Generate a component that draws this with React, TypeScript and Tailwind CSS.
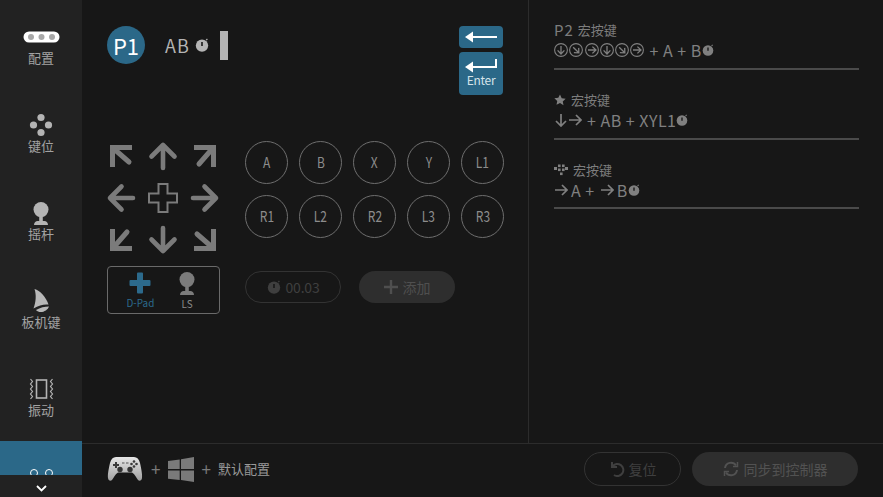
const font = "font-['Noto_Sans_CJK_SC',sans-serif]";

const PadArrow = ({ rot }: { rot: number }) => (
  <svg width="30" height="30" viewBox="0 0 30 30" style={{ transform: `rotate(${rot}deg)` }}>
    <path d="M15 27V4.500M3.500 15.500L15 4l11.500 11.500" fill="none" stroke="#7b7b7b" strokeWidth="4.600" strokeLinecap="round" strokeLinejoin="round" />
  </svg>
);

const DiagArrow = ({ rot }: { rot: number }) => (
  <svg width="30" height="30" viewBox="0 0 30 30" style={{ transform: `rotate(${rot}deg)` }}>
    <path d="M6.500 26V6.500H26" fill="none" stroke="#7b7b7b" strokeWidth="5" strokeLinejoin="miter" />
    <path d="M7.500 7.500L23 21" fill="none" stroke="#7b7b7b" strokeWidth="5" strokeLinecap="round" />
  </svg>
);

const CrossOutline = () => (
  <svg width="30" height="30" viewBox="0 0 30 30">
    <path d="M10.500 1h9v9.500H29v9h-9.500V29h-9v-9.500H1v-9h9.500z" fill="none" stroke="#7b7b7b" strokeWidth="2" />
  </svg>
);

const Timer = ({ size = 14, fill = "#8a8a8a", hand = "#171717" }: { size?: number; fill?: string; hand?: string }) => (
  <svg width={size} height={size} viewBox="0 0 14 14" className="shrink-0">
    <circle cx="7" cy="7.600" r="6.200" fill={fill} />
    <path d="M11.200 2.200l1.200-1.200" stroke={fill} strokeWidth="1.200" />
    <path d="M7 4v4" stroke={hand} strokeWidth="1.600" />
  </svg>
);

const CircleArrow = ({ rot }: { rot: number }) => (
  <svg width="14" height="14" viewBox="0 0 14 14" className="shrink-0">
    <circle cx="7" cy="7" r="6.400" fill="none" stroke="#808080" strokeWidth="1.100" />
    <g transform={`rotate(${rot} 7 7)`}>
      <path d="M7 11V3M3.600 7.400L7 11l3.400-3.600" fill="none" stroke="#808080" strokeWidth="1.300" />
    </g>
  </svg>
);

const SmallArrow = ({ rot, w = 14 }: { rot: number; w?: number }) => (
  <svg width={w} height="14" viewBox="0 0 14 14" className="shrink-0">
    <g transform={`rotate(${rot} 7 7)`}>
      <path d="M7 13V1M2 8l5 5 5-5" fill="none" stroke="#808080" strokeWidth="1.700" />
    </g>
  </svg>
);

const ConfigIcon = () => (
  <svg width="37" height="12" viewBox="0 0 37 12">
    <rect x="0.500" y="0.500" width="36" height="11" rx="5.500" fill="#fff" />
    <circle cx="8" cy="6" r="3" fill="#a8a8a8" />
    <circle cx="18.500" cy="6" r="3" fill="#a8a8a8" />
    <circle cx="29" cy="6" r="3" fill="#a8a8a8" />
  </svg>
);

const KeysIcon = () => (
  <svg width="24" height="24" viewBox="0 0 24 24" fill="#b4b4b4">
    <circle cx="12" cy="4.500" r="3.600" />
    <circle cx="4.500" cy="12" r="3.600" />
    <circle cx="19.500" cy="12" r="3.600" />
    <circle cx="12" cy="19.500" r="3.600" />
  </svg>
);

const StickIcon = ({ color = "#b4b4b4" }: { color?: string }) => (
  <svg width="16" height="23" viewBox="0 0 16 23" fill={color}>
    <circle cx="8" cy="7.600" r="7.500" />
    <rect x="6.200" y="14" width="3.600" height="5" />
    <path d="M1 23c0-2.500 2-4 3.500-4h7c1.500 0 3.500 1.500 3.500 4z" />
  </svg>
);

const TriggerIcon = () => (
  <svg width="18" height="24" viewBox="0 0 18 24" fill="#b8b8b8">
    <path d="M2.500 0C8 1.500 14 8 16.500 15.500 12 15 7 16 1.500 19.500 4 13 4.500 6 2.500 0z" />
    <path d="M4 21c4-2.500 9-3.500 13-3.500-1.500 4.500-9 8-13 3.500z" />
  </svg>
);

const RumbleIcon = () => (
  <svg width="25" height="22" viewBox="0 0 25 22" fill="none" stroke="#b4b4b4">
    <rect x="7.500" y="2" width="10" height="18" strokeWidth="1.600" />
    <path d="M1.500 1l2 2.500-2 2.500 2 2.500-2 2.500 2 2.500-2 2.500 2 2.500-2 2.500M23.500 1l-2 2.500 2 2.500-2 2.500 2 2.500-2 2.500 2 2.500-2 2.500 2 2.500" strokeWidth="1.200" />
  </svg>
);

const DPadFill = ({ color = "#2c6a8c", size = 22 }: { color?: string; size?: number }) => (
  <svg width={size} height={size} viewBox="0 0 22 22" fill={color}>
    <path d="M8 1.500a1 1 0 0 1 1-1h4a1 1 0 0 1 1 1V8h6.500a1 1 0 0 1 1 1v4a1 1 0 0 1-1 1H14v6.500a1 1 0 0 1-1 1H9a1 1 0 0 1-1-1V14H1.500a1 1 0 0 1-1-1V9a1 1 0 0 1 1-1H8z" />
  </svg>
);

const Gamepad = () => (
  <svg width="36" height="26" viewBox="0 0 36 26">
    <defs>
      <linearGradient id="pad" x1="0" y1="0" x2="0" y2="1">
        <stop offset="0" stopColor="#e6e6e6" />
        <stop offset="1" stopColor="#a0a0a0" />
      </linearGradient>
    </defs>
    <path d="M9 1h18c3 0 5 2 6 6 1 4.500 2.500 11 2 15-.3 2.500-2.500 3.500-4 2-2-2.500-3-6-6-7.500H11C8 18 7 21.500 5 24c-1.500 1.500-3.700.5-4-2-.5-4 1-10.500 2-15 1-4 3-6 6-6z" fill="url(#pad)" />
    <path d="M8 6h2v2h2v2h-2v2H8v-2H6V8h2z" fill="#3a3a3a" />
    <circle cx="27" cy="5.500" r="1.300" fill="#3a3a3a" />
    <circle cx="24.500" cy="8" r="1.300" fill="#3a3a3a" />
    <circle cx="29.500" cy="8" r="1.300" fill="#3a3a3a" />
    <circle cx="27" cy="10.500" r="1.300" fill="#3a3a3a" />
    <path d="M15 7h2.500M19 7h2.500" stroke="#555" strokeWidth="1.200" />
    <circle cx="13" cy="13.500" r="2.700" fill="#333" />
    <circle cx="23" cy="13.500" r="2.700" fill="#333" />
  </svg>
);

const WindowsLogo = () => (
  <svg width="26" height="25" viewBox="0 0 26 26" fill="#7a7a7a" preserveAspectRatio="none">
    <path d="M0 4.200l11.700-1.700v10H0zM13 2.300L26 0v12.500H13zM0 14h11.700v10L0 22.500zM13 14h13v12l-13-2z" />
  </svg>
);

const navItems = [
  { label: "配置", icon: <ConfigIcon /> },
  { label: "键位", icon: <KeysIcon /> },
  { label: "摇杆", icon: <StickIcon /> },
  { label: "板机键", icon: <TriggerIcon /> },
  { label: "振动", icon: <RumbleIcon /> },
];

const buttons = ["A", "B", "X", "Y", "L1", "R1", "L2", "R2", "L3", "R3"];

const Sidebar = () => (
  <div className="w-[82px] shrink-0 bg-[#222222] flex flex-col overflow-hidden">
    {navItems.map((item) => (
      <div key={item.label} className="h-[88px] shrink-0 flex flex-col items-center">
        <div className="h-8 mt-[21px] flex items-center justify-center">{item.icon}</div>
        <div className="text-[13px] leading-5 -mt-[5px] text-[#a2a2a2]">{item.label}</div>
      </div>
    ))}
    <div className="mt-px h-[34px] shrink-0 bg-[#2b6888] flex items-end justify-center gap-[7px] overflow-hidden">
      <div className="w-2 h-2 rounded-full border-[1.5px] border-white -mb-[2px]" />
      <div className="w-2 h-2 rounded-full border-[1.5px] border-white -mb-[2px]" />
    </div>
    <div className="flex-1 flex items-center justify-center pt-1">
      <svg width="11" height="7" viewBox="0 0 11 7">
        <path d="M1 1l4.500 4.500L10 1" fill="none" stroke="#fff" strokeWidth="1.800" />
      </svg>
    </div>
  </div>
);

const MacroTitle = ({ icon, gap }: { icon: React.ReactNode; gap: string }) => (
  <div className={`flex items-center h-[18px] text-[13px] text-[#7d7d7d] ${gap}`}>
    {icon}
    <span>宏按键</span>
  </div>
);

const MacroCard = ({ title, children }: { title: React.ReactNode; children: React.ReactNode }) => (
  <div className="h-[69.5px] pt-[21px] border-b-2 border-[#4a4a4a] box-border first:h-[70px]">
    {title}
    <div className="flex items-center h-[20px] mt-[1px] text-[16px] text-[#808080] tracking-[0.5px]">{children}</div>
  </div>
);

export default function App() {
  return (
    <div className={`w-[883px] h-[497px] flex overflow-hidden bg-[#171717] ${font}`}>
      <Sidebar />
      <div className="flex-1 flex flex-col min-w-0">
        <div className="h-[443px] flex">
          <div className="w-[446px] shrink-0 pl-[25px] pt-[26px]">
            <div className="w-[396px] flex justify-between items-start h-[68px]">
              <div className="flex items-center h-[38px]">
                <div className="w-[38px] h-[38px] rounded-full bg-[#2b6888] text-white text-[22px] flex items-center justify-center">
                  P1
                </div>
                <div className="ml-5 text-[18px] tracking-[1px] text-[#b4b4b4]">AB</div>
                <div className="ml-[5px]">
                  <Timer size={14} fill="#b4b4b4" />
                </div>
                <div className="ml-[11px] w-2 h-[29px] bg-[#b4b4b4]" />
              </div>
              <div className="w-11 flex flex-col gap-1">
                <div className="h-[22px] rounded-[4px] bg-[#2b6888] flex items-center justify-center">
                  <svg width="32" height="12" viewBox="0 0 32 12">
                    <path d="M0 6l8-5.500v4.500h24v2H8v4.500z" fill="#fff" />
                  </svg>
                </div>
                <div className="h-[43px] rounded-[4px] bg-[#2b6888] flex flex-col items-center pt-[7px]">
                  <svg width="32" height="14" viewBox="0 0 32 14">
                    <path d="M0 8l8-5.500v4.500h22V0h2v9H8v4.500z" fill="#fff" />
                  </svg>
                  <span className="text-[12px] leading-[14px] tracking-[-0.3px] text-[#d5e3ea]">Enter</span>
                </div>
              </div>
            </div>
            <div className="flex mt-[47px]">
              <div className="w-[113px] shrink-0 flex flex-col">
                <div className="-ml-px w-[114px] grid grid-cols-[30px_30px_30px] gap-3">
                  <DiagArrow rot={0} />
                  <PadArrow rot={0} />
                  <DiagArrow rot={90} />
                  <PadArrow rot={270} />
                  <CrossOutline />
                  <PadArrow rot={90} />
                  <DiagArrow rot={270} />
                  <PadArrow rot={180} />
                  <DiagArrow rot={180} />
                </div>
                <div className="mt-[11px] h-[48px] rounded-[4px] border border-[#6a6a6a] flex gap-[26px] pl-[19px] pt-[5px]">
                  <div className="w-[26px] flex flex-col items-center">
                    <DPadFill />
                    <span className="inline-block text-[11px] leading-4 scale-x-90 whitespace-nowrap text-[#2c6a8c]">D-Pad</span>
                  </div>
                  <div className="w-4 flex flex-col items-center">
                    <StickIcon color="#7b7b7b" />
                    <span className="inline-block text-[11px] leading-4 scale-x-90 text-[#8a8a8a]">LS</span>
                  </div>
                </div>
              </div>
              <div className="ml-[25px]">
                <div className="grid grid-cols-[43px_43px_43px_43px_43px] gap-x-[11px] gap-y-[11px]">
                  {buttons.map((b) => (
                    <div
                      key={b}
                      className="w-[43px] h-[43px] rounded-full border border-[#6e6e6e] flex items-center justify-center text-[15px] text-[#8c8c8c]"
                    >
                      <span className="inline-block scale-x-[0.8]">{b}</span>
                    </div>
                  ))}
                </div>
                <div className="mt-[33px] flex gap-[18px]">
                  <div className="w-[96px] h-8 rounded-full border border-[#333333] flex items-center justify-center gap-[5px] text-[14px] tracking-[-0.2px] text-[#3f3f3f]">
                    <Timer size={14} fill="#3f3f3f" hand="#171717" />
                    00.03
                  </div>
                  <div className="w-[96px] h-8 rounded-full bg-[#2e2e2e] flex items-center justify-center gap-[5px] text-[14px] text-[#4f4f4f]">
                    <svg width="14" height="14" viewBox="0 0 14 14">
                      <path d="M7 0v14M0 7h14" stroke="#4f4f4f" strokeWidth="2.400" />
                    </svg>
                    添加
                  </div>
                </div>
              </div>
            </div>
          </div>
          <div className="flex-1 border-l border-[#2c2c2c] pl-[25px] pr-[24px]">
            <MacroCard title={<MacroTitle gap="gap-[4px]" icon={<span className="text-[15px] tracking-[1px]">P2</span>} />}>
              <div className="flex gap-[1.300px]">
                <CircleArrow rot={0} />
                <CircleArrow rot={-45} />
                <CircleArrow rot={-90} />
                <CircleArrow rot={0} />
                <CircleArrow rot={-45} />
                <CircleArrow rot={-90} />
              </div>
              <span className="ml-[5px]">+ A + B</span>
              <Timer size={12} fill="#808080" />
            </MacroCard>
            <MacroCard
              title={
                <MacroTitle
                  gap="gap-[5px]"
                  icon={
                    <svg width="12" height="12" viewBox="0 0 24 24" fill="#808080">
                      <path d="M12 1l3.400 7.300 7.900 1-5.800 5.500 1.500 7.900L12 18l-7 3.700 1.500-7.900L.7 8.300l7.900-1z" />
                    </svg>
                  }
                />
              }
            >
              <SmallArrow rot={0} />
              <SmallArrow rot={-90} />
              <span className="ml-[5px]">+ AB + XYL1</span>
              <Timer size={12} fill="#808080" />
            </MacroCard>
            <MacroCard
              title={
                <MacroTitle
                  gap="gap-[5px]"
                  icon={
                    <svg width="14" height="12" viewBox="0 0 14 12" fill="#808080">
                      <rect x="0" y="3" width="3" height="3" />
                      <rect x="4" y="0.500" width="2.600" height="2.600" />
                      <rect x="8" y="0.500" width="2.600" height="2.600" />
                      <rect x="11" y="3" width="3" height="3" />
                      <rect x="4" y="4.500" width="2.600" height="2.600" />
                      <rect x="8" y="4.500" width="2.600" height="2.600" />
                      <rect x="6" y="8.500" width="2.600" height="2.600" />
                    </svg>
                  }
                />
              }
            >
              <SmallArrow rot={-90} />
              <span className="ml-[3px]">A +</span>
              <span className="ml-[5px]">
                <SmallArrow rot={-90} />
              </span>
              <span className="ml-[3px]">B</span>
              <Timer size={12} fill="#808080" />
            </MacroCard>
          </div>
        </div>
        <div className="flex-1 border-t border-[#2c2c2c] pl-[25px] pr-[25px] flex items-center justify-between">
          <div className="flex items-center -mt-[3px]">
            <Gamepad />
            <span className="ml-[8px] text-[17px] text-[#7a7a7a]">+</span>
            <span className="ml-[8px]">
              <WindowsLogo />
            </span>
            <span className="ml-[7px] text-[17px] text-[#7a7a7a]">+</span>
            <span className="ml-[7px] text-[13px] text-[#9a9a9a]">默认配置</span>
          </div>
          <div className="flex items-center gap-[11px] -mt-[3px]">
            <div className="w-[97px] h-[34px] rounded-full border border-[#333333] flex items-center justify-center gap-[4px] text-[14px] text-[#3f3f3f]">
              <svg width="16" height="16" viewBox="0 0 16 16" fill="none" stroke="#3f3f3f" strokeWidth="2">
                <path d="M3 1v5h5M3.500 5.500A6 6 0 1 1 5 14" />
              </svg>
              复位
            </div>
            <div className="w-[166px] h-[34px] rounded-full bg-[#2e2e2e] flex items-center justify-center gap-[5px] text-[14px] text-[#525252]">
              <svg width="16" height="16" viewBox="0 0 16 16" fill="none" stroke="#525252" strokeWidth="2">
                <path d="M2 7a6 6 0 0 1 11-2.500M14 9a6 6 0 0 1-11 2.500" />
                <path d="M14.500 1v4.500H10M1.500 15v-4.500H6" strokeWidth="1.500" />
              </svg>
              同步到控制器
            </div>
          </div>
        </div>
      </div>
    </div>
  );
}
